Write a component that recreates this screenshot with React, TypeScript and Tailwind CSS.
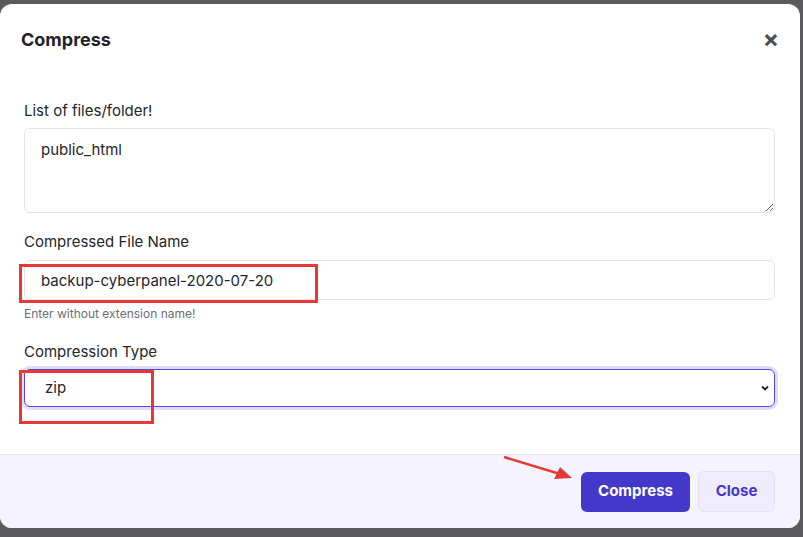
import React from 'react';

export default function App() {
  return (
    <div className="w-[803px] h-[537px] bg-[#5b5b5d] overflow-hidden" style={{ fontFamily: 'Inter, "Noto Sans", sans-serif' }}>
      <div className="h-[4px]" />
      <div className="relative w-[800px] h-[524px] bg-white rounded-xl flex flex-col overflow-hidden">
        <div className="flex items-center justify-between h-[70px] px-[21px]">
          <h2 className="text-[18px] font-bold text-[#1f2329]">Compress</h2>
          <span className="text-[24px] font-bold text-[#4a4d52] leading-none">×</span>
        </div>
        <div className="flex-1 px-[24px] pt-[26px]">
          <label className="block text-[15px] leading-[22px] text-[#23262b] mb-[6px]">List of files/folder!</label>
          <textarea
            defaultValue="public_html"
            className="block w-[751px] h-[85px] rounded-md border border-[#e4e1f7] px-[16px] py-[10px] text-[15px] text-[#23262b] outline-none"
          />
          <label className="block text-[15px] leading-[22px] text-[#23262b] mt-[18px] mb-[7px]">Compressed File Name</label>
          <input
            defaultValue="backup-cyberpanel-2020-07-20"
            className="block w-[751px] h-[40px] rounded-md border border-[#e4e1f7] px-[16px] text-[15px] text-[#23262b] outline-none"
          />
          <p className="text-[12px] leading-[16px] text-[#6b6f76] mt-[6px]">Enter without extension name!</p>
          <label className="block text-[15px] leading-[22px] text-[#23262b] mt-[19px] mb-[6px]">Compression Type</label>
          <div className="relative w-[751px] h-[38px] rounded-md border border-[#4f46e5] ring-[3px] ring-[#e0ddfb] flex items-center px-[20px] text-[15px] text-[#23262b]">
            zip
            <svg className="absolute right-[4px] top-[13px]" width="10" height="10" viewBox="0 0 10 10">
              <path d="M2 3.5 L5 6.5 L8 3.5" stroke="#222" strokeWidth="1.8" fill="none" />
            </svg>
          </div>
        </div>
        <div className="h-[74px] bg-[#f5f4fe] border-t border-[#e4e1f7] flex items-center justify-end gap-[8px] pr-[25px]">
          <button className="h-[40px] w-[109px] rounded-md bg-[#4338ca] text-white font-bold text-[15px]">Compress</button>
          <button className="h-[41px] w-[77px] rounded-md bg-[#efedfd] border border-[#e4e1f7] text-[#4338ca] font-bold text-[15px]">Close</button>
        </div>

        {/* annotation overlays */}
        <div className="absolute left-[19px] top-[260px] w-[299px] h-[39px] border-[3px] border-[#e53935]" />
        <div className="absolute left-[19px] top-[366px] w-[135px] h-[54px] border-[3px] border-[#e53935]" />
        <svg className="absolute left-[502px] top-[450px]" width="72" height="28" viewBox="0 0 72 28">
          <line x1="2" y1="3" x2="58" y2="20" stroke="#e53935" strokeWidth="2.5" />
          <polygon points="70,24 52,25 58,13" fill="#e53935" />
        </svg>
      </div>
    </div>
  );
}
